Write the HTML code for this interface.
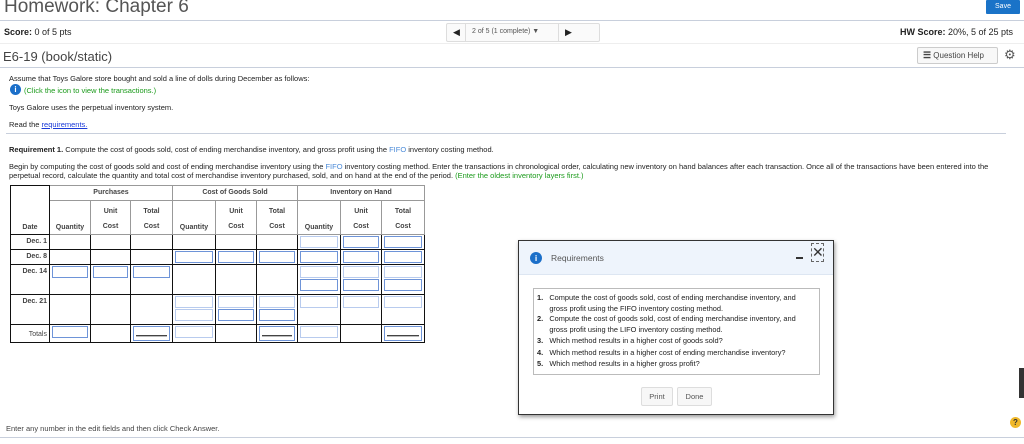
<!DOCTYPE html>
<html><head><meta charset="utf-8"><style>
*{margin:0;padding:0;box-sizing:border-box}
body{width:1024px;height:444px;overflow:hidden;background:#fff;font-family:"Liberation Sans",sans-serif;color:#222;position:relative}
.a{position:absolute;white-space:nowrap}
.hl{position:absolute;height:1px;background:#c8cfdc}
.s{font-size:7.5px}
table{position:absolute;left:10px;top:185px;border-collapse:collapse;font-size:7px;font-weight:bold;color:#444}
td{border:1px solid #111;padding:0;vertical-align:top;position:relative}
.h td{border-color:#999;text-align:center}
.in{display:block;border:1px solid #6e94d8;height:12px;margin:1px 2px}
.li{border-color:#b8cbee}
.dl{text-align:right;padding-right:2px;padding-top:3px}
.dbl{display:block;height:2px;background:#444;margin:8px 2px 0;border-bottom:1px solid #bbb}
</style></head><body>
<div class="a" style="left:4px;top:-4px;font-size:19px;color:#555">Homework: Chapter 6</div>
<div class="a" style="left:986px;top:0;width:34px;height:14px;background:#1a73c8;color:#fff;font-size:7px;text-align:center;line-height:13px;border-radius:1px">Save</div>
<div class="hl" style="left:0;top:20px;width:1024px"></div>
<div class="a" style="left:4px;top:27px;font-size:9px"><b>Score:</b> 0 of 5 pts</div>
<div class="a" style="left:446px;top:23px;width:154px;height:19px;border:1px solid #ddd;border-radius:2px;background:#fafafa"></div>
<div class="a" style="left:465px;top:23px;width:1px;height:19px;background:#ddd"></div>
<div class="a" style="left:558px;top:23px;width:1px;height:19px;background:#ddd"></div>
<div class="a" style="left:453px;top:27px;font-size:9px">◀</div>
<div class="a" style="left:472px;top:28px;font-size:7px;color:#555">2 of 5 (1 complete) ▼</div>
<div class="a" style="left:565px;top:27px;font-size:9px">▶</div>
<div class="a" style="left:900px;top:27px;font-size:9px"><b>HW Score:</b> 20%, 5 of 25 pts</div>
<div class="hl" style="left:0;top:43px;width:1024px;background:#eee"></div>
<div class="a" style="left:3px;top:49px;font-size:13px;color:#444">E6-19 (book/static)</div>
<div class="a" style="left:917px;top:47px;width:81px;height:17px;border:1px solid #ccc;border-radius:2px;background:#f8f8f8;font-size:8px;color:#444;line-height:15px;padding-left:5px"><b style="font-size:9px">☰</b> Question Help</div>
<div class="a" style="left:1004px;top:47px;font-size:13px;color:#555">⚙</div>
<div class="hl" style="left:0;top:67px;width:1024px"></div>
<div class="a s" style="left:9px;top:74px">Assume that Toys Galore store bought and sold a line of dolls during December as follows:</div>
<div class="a" style="left:10px;top:84px;width:11px;height:11px;border-radius:50%;background:#1b6fc9;color:#fff;font-size:8px;font-weight:bold;text-align:center;line-height:11px">i</div>
<div class="a s" style="left:24px;top:86px;color:#1a9a1a">(Click the icon to view the transactions.)</div>
<div class="a s" style="left:9px;top:103px">Toys Galore uses the perpetual inventory system.</div>
<div class="a s" style="left:9px;top:120px">Read the <span style="color:#1a3ad8;text-decoration:underline">requirements.</span></div>
<div class="hl" style="left:6px;top:133px;width:1000px"></div>
<div class="a s" style="left:9px;top:145px"><b>Requirement 1.</b> Compute the cost of goods sold, cost of ending merchandise inventory, and gross profit using the <span style="color:#4a8ad8">FIFO</span> inventory costing method.</div>
<div class="a s" style="left:9px;top:162px">Begin by computing the cost of goods sold and cost of ending merchandise inventory using the <span style="color:#4a8ad8">FIFO</span> inventory costing method. Enter the transactions in chronological order, calculating new inventory on hand balances after each transaction. Once all of the transactions have been entered into the</div>
<div class="a s" style="left:9px;top:171px">perpetual record, calculate the quantity and total cost of merchandise inventory purchased, sold, and on hand at the end of the period. <span style="color:#1a9a1a">(Enter the oldest inventory layers first.)</span></div>

<table>
<colgroup><col style="width:39px"><col style="width:41px"><col style="width:40px"><col style="width:42px"><col style="width:43px"><col style="width:41px"><col style="width:41px"><col style="width:43px"><col style="width:41px"><col style="width:43px"></colgroup>
<tr class="h" style="height:15px"><td rowspan="2" style="border-color:#111;vertical-align:bottom;padding-bottom:3px">Date</td><td colspan="3" style="padding-top:3px">Purchases</td><td colspan="3" style="padding-top:3px">Cost of Goods Sold</td><td colspan="3" style="padding-top:3px">Inventory on Hand</td></tr>
<tr class="h" style="height:30px"><td style="vertical-align:bottom;padding-bottom:3px">Quantity</td><td style="padding-top:3px;line-height:15px">Unit<br>Cost</td><td style="padding-top:3px;line-height:15px">Total<br>Cost</td><td style="vertical-align:bottom;padding-bottom:3px">Quantity</td><td style="padding-top:3px;line-height:15px">Unit<br>Cost</td><td style="padding-top:3px;line-height:15px">Total<br>Cost</td><td style="vertical-align:bottom;padding-bottom:3px">Quantity</td><td style="padding-top:3px;line-height:15px">Unit<br>Cost</td><td style="padding-top:3px;line-height:15px">Total<br>Cost</td></tr>
<tr style="height:15px"><td class="dl">Dec. 1</td><td></td><td></td><td></td><td></td><td></td><td></td><td><span class="in li"></span></td><td><span class="in"></span></td><td><span class="in"></span></td></tr>
<tr style="height:15px"><td class="dl">Dec. 8</td><td></td><td></td><td></td><td><span class="in"></span></td><td><span class="in"></span></td><td><span class="in"></span></td><td><span class="in"></span></td><td><span class="in"></span></td><td><span class="in"></span></td></tr>
<tr style="height:30px"><td class="dl">Dec. 14</td><td><span class="in"></span></td><td><span class="in"></span></td><td><span class="in"></span></td><td></td><td></td><td></td><td><span class="in li"></span><span class="in"></span></td><td><span class="in li"></span><span class="in"></span></td><td><span class="in li"></span><span class="in"></span></td></tr>
<tr style="height:30px"><td class="dl">Dec. 21</td><td></td><td></td><td></td><td><span class="in li"></span><span class="in li"></span></td><td><span class="in li"></span><span class="in"></span></td><td><span class="in li"></span><span class="in"></span></td><td><span class="in li"></span></td><td><span class="in li"></span></td><td><span class="in li"></span></td></tr>
<tr style="height:18px"><td class="dl" style="font-weight:normal;padding-top:6px">Totals</td><td><span class="in"></span></td><td></td><td><span class="in" style="height:15px"><span class="dbl"></span></span></td><td><span class="in li"></span></td><td></td><td><span class="in" style="height:15px"><span class="dbl"></span></span></td><td><span class="in li"></span></td><td></td><td><span class="in" style="height:15px"><span class="dbl"></span></span></td></tr>
</table>

<div class="a" style="left:518px;top:240px;width:316px;height:175px;border:1px solid #333;background:#fff;box-shadow:1px 2px 4px rgba(0,0,0,.4)"></div>
<div class="a" style="left:519px;top:241px;width:314px;height:34px;background:#eef4fc;border-bottom:1px solid #dde6f2"></div>
<div class="a" style="left:530px;top:252px;width:12px;height:12px;border-radius:50%;background:#1b6fc9;color:#fff;font-size:8.5px;font-weight:bold;text-align:center;line-height:12px">i</div>
<div class="a" style="left:551px;top:253px;font-size:8.5px;color:#555">Requirements</div>
<div class="a" style="left:796px;top:257px;width:7px;height:2px;background:#333"></div>
<div class="a" style="left:811px;top:243px;width:13px;height:19px;border:1px dashed #666;font-size:14px;line-height:16px;text-align:center;color:#333">✕</div>
<div class="a" style="left:533px;top:288px;width:287px;height:87px;border:1px solid #bbb"></div>
<div class="a" style="left:537px;top:293px;font-size:7.4px;line-height:10.5px;color:#222">
<div><b>1.</b>&nbsp;&nbsp;&nbsp;Compute the cost of goods sold, cost of ending merchandise inventory, and<br>&nbsp;&nbsp;&nbsp;&nbsp;&nbsp;&nbsp;gross profit using the FIFO inventory costing method.</div>
<div><b>2.</b>&nbsp;&nbsp;&nbsp;Compute the cost of goods sold, cost of ending merchandise inventory, and<br>&nbsp;&nbsp;&nbsp;&nbsp;&nbsp;&nbsp;gross profit using the LIFO inventory costing method.</div>
<div style="margin-top:1px"><b>3.</b>&nbsp;&nbsp;&nbsp;Which method results in a higher cost of goods sold?</div>
<div style="margin-top:1px"><b>4.</b>&nbsp;&nbsp;&nbsp;Which method results in a higher cost of ending merchandise inventory?</div>
<div style="margin-top:1px"><b>5.</b>&nbsp;&nbsp;&nbsp;Which method results in a higher gross profit?</div>
</div>
<div class="a" style="left:641px;top:387px;width:32px;height:19px;border:1px solid #ddd;border-radius:2px;background:#f7f7f7;font-size:7.5px;color:#555;text-align:center;line-height:17px">Print</div>
<div class="a" style="left:677px;top:387px;width:35px;height:19px;border:1px solid #ddd;border-radius:2px;background:#f7f7f7;font-size:7.5px;color:#555;text-align:center;line-height:17px">Done</div>

<div class="a" style="left:1019px;top:368px;width:5px;height:30px;background:#333"></div>
<div class="a s" style="left:6px;top:424px;color:#444">Enter any number in the edit fields and then click Check Answer.</div>
<div class="a" style="left:1010px;top:417px;width:11px;height:11px;border-radius:50%;background:#f0b82a;color:#333;font-size:8px;font-weight:bold;text-align:center;line-height:11px">?</div>
<div class="hl" style="left:0;top:437px;width:1024px"></div>
</body></html>
